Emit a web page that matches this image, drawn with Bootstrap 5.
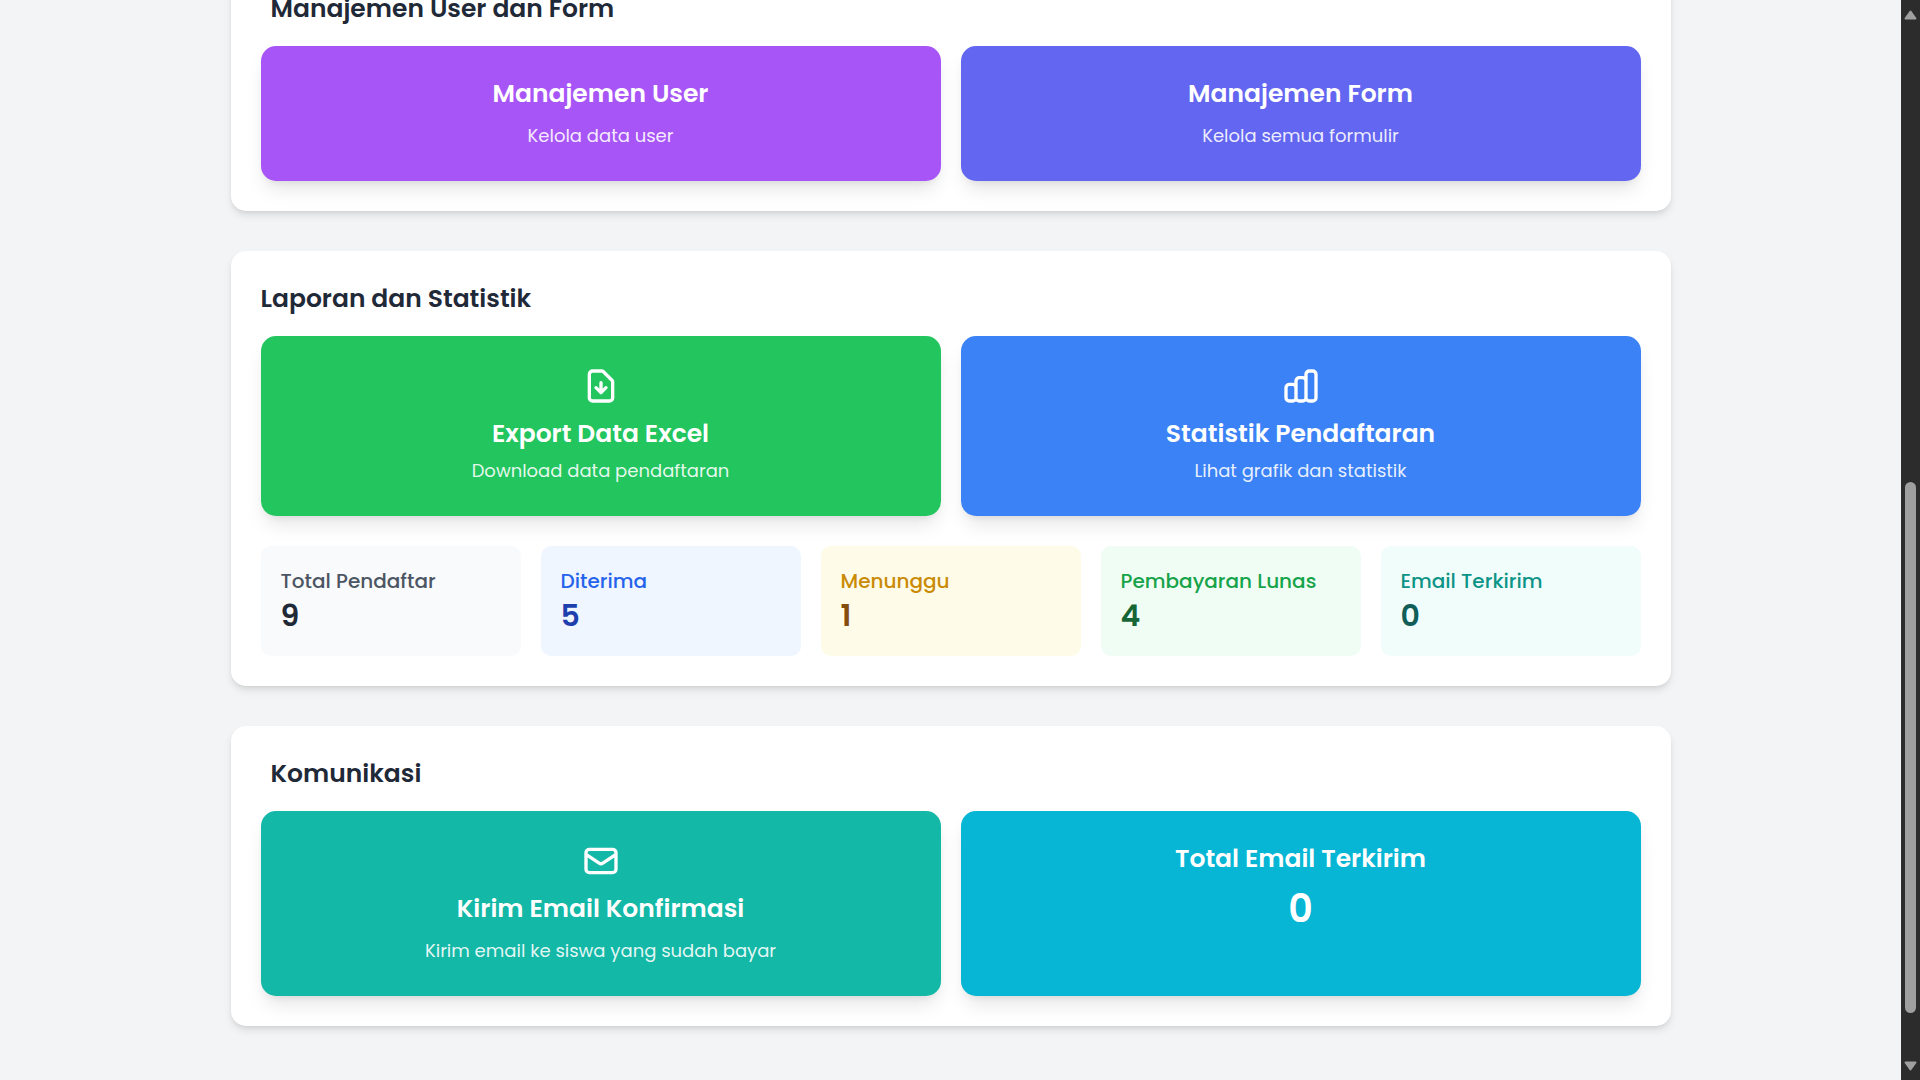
<!DOCTYPE html>
<html lang="id">
<head>
<meta charset="utf-8">
<meta name="viewport" content="width=device-width, initial-scale=1">
<title>Dashboard Admin</title>
<link rel="stylesheet" href="https://cdn.jsdelivr.net/npm/bootstrap@5.3.0/dist/css/bootstrap.min.css">
<style>
  body { background: #f3f4f6; font-family: Poppins, Inter, "Open Sans", sans-serif; color: #1f2937; }
  .viewport { height: 100vh; }
  .dash { max-width: 1440px; gap: 40px; padding-bottom: 54px; }
  .panel { background: #fff; border-radius: 15px; padding: 30px;
    box-shadow: 0 5px 8px -1px rgba(0,0,0,.1), 0 2px 5px -2px rgba(0,0,0,.1); }
  .panel-title { font-size: 25px; line-height: 35px; font-weight: 600; margin: 0 0 20px; }
  .panel-title.indent { padding-left: 10px; }
  .tile { border: 0; border-radius: 15px; padding: 30px; color: #fff; text-align: center; text-decoration: none;
    box-shadow: 0 12px 19px -4px rgba(0,0,0,.1), 0 5px 8px -5px rgba(0,0,0,.1); }
  .tile-title { font-size: 25px; line-height: 35px; font-weight: 600; margin: 0; }
  .tile-text { font-size: 18px; line-height: 30px; color: rgba(255,255,255,.9); margin: 10px 0 0; }
  .tile-text.tight { margin-top: 5px; }
  .tile-count { font-size: 38px; line-height: 45px; font-weight: 600; margin: 10px 0 0; }
  .tile svg { width: 40px; height: 40px; margin-bottom: 10px; fill: none; stroke: #fff; stroke-width: 2; stroke-linecap: round; stroke-linejoin: round; }
  .grid-gap { --bs-gutter-x: 20px; --bs-gutter-y: 20px; }
  .stats-row { margin-top: 10px; }
  .bg-purple { background: #a855f7; } .bg-indigo { background: #6366f1; }
  .bg-green { background: #22c55e; } .bg-blue { background: #3b82f6; }
  .bg-teal { background: #14b8a6; } .bg-cyan { background: #06b6d4; }
  .stat { border-radius: 10px; padding: 20px; }
  .stat-label { font-size: 20px; line-height: 30px; font-weight: 500; margin: 0; }
  .stat-value { font-size: 30px; line-height: 40px; font-weight: 600; margin: 0; }
  .stat-gray { background: #f9fafb; color: #1f2937; } .stat-gray .stat-label { color: #4b5563; }
  .stat-blue { background: #eff6ff; color: #1e40af; } .stat-blue .stat-label { color: #2563eb; }
  .stat-yellow { background: #fefce8; color: #854d0e; } .stat-yellow .stat-label { color: #ca8a04; }
  .stat-green { background: #f0fdf4; color: #166534; } .stat-green .stat-label { color: #16a34a; }
  .stat-teal { background: #f0fdfa; color: #115e59; } .stat-teal .stat-label { color: #0d9488; }
  .scroll-track { width: 19px; background: #2c2c2c; padding: 10px 0 9px; }
  .scroll-track svg { width: 13px; height: 10px; fill: #9f9f9f; stroke: #9f9f9f; stroke-width: 2; stroke-linejoin: round; }
  .scroll-space { flex: 462 1 0; }
  .scroll-thumb { flex: 531 1 0; width: 11px; border-radius: 6px; background: #9f9f9f; }
  .scroll-rest { flex: 48 1 0; }
</style>
<script src="https://cdn.jsdelivr.net/npm/bootstrap@5.3.0/dist/js/bootstrap.bundle.min.js"></script>
</head>
<body>
<div class="viewport d-flex overflow-hidden">
  <div class="flex-grow-1 d-flex flex-column justify-content-end align-items-center">
    <main class="dash w-100 d-flex flex-column flex-shrink-0">
      <section class="panel">
        <h2 class="panel-title indent">Manajemen User dan Form</h2>
        <div class="row grid-gap">
          <div class="col-6"><a href="#" class="tile bg-purple d-block h-100">
            <h3 class="tile-title">Manajemen User</h3>
            <p class="tile-text">Kelola data user</p>
          </a></div>
          <div class="col-6"><a href="#" class="tile bg-indigo d-block h-100">
            <h3 class="tile-title">Manajemen Form</h3>
            <p class="tile-text">Kelola semua formulir</p>
          </a></div>
        </div>
      </section>

      <section class="panel">
        <h2 class="panel-title">Laporan dan Statistik</h2>
        <div class="row grid-gap">
          <div class="col-6"><a href="#" class="tile bg-green d-flex flex-column align-items-center h-100">
            <svg viewBox="0 0 24 24" aria-hidden="true"><path d="M12 10v6m0 0l-3-3m3 3l3-3m2 8H7a2 2 0 01-2-2V5a2 2 0 012-2h5.586a1 1 0 01.707.293l5.414 5.414a1 1 0 01.293.707V19a2 2 0 01-2 2z"/></svg>
            <h3 class="tile-title">Export Data Excel</h3>
            <p class="tile-text tight">Download data pendaftaran</p>
          </a></div>
          <div class="col-6"><a href="#" class="tile bg-blue d-flex flex-column align-items-center h-100">
            <svg viewBox="0 0 24 24" aria-hidden="true"><path d="M9 19v-6a2 2 0 00-2-2H5a2 2 0 00-2 2v6a2 2 0 002 2h2a2 2 0 002-2zm0 0V9a2 2 0 012-2h2a2 2 0 012 2v10m-6 0a2 2 0 002 2h2a2 2 0 002-2m0 0V5a2 2 0 012-2h2a2 2 0 012 2v14a2 2 0 01-2 2h-2a2 2 0 01-2-2z"/></svg>
            <h3 class="tile-title">Statistik Pendaftaran</h3>
            <p class="tile-text tight">Lihat grafik dan statistik</p>
          </a></div>
        </div>
        <div class="row row-cols-5 grid-gap stats-row">
          <div class="col"><div class="stat stat-gray"><p class="stat-label">Total Pendaftar</p><p class="stat-value">9</p></div></div>
          <div class="col"><div class="stat stat-blue"><p class="stat-label">Diterima</p><p class="stat-value">5</p></div></div>
          <div class="col"><div class="stat stat-yellow"><p class="stat-label">Menunggu</p><p class="stat-value">1</p></div></div>
          <div class="col"><div class="stat stat-green"><p class="stat-label">Pembayaran Lunas</p><p class="stat-value">4</p></div></div>
          <div class="col"><div class="stat stat-teal"><p class="stat-label">Email Terkirim</p><p class="stat-value">0</p></div></div>
        </div>
      </section>

      <section class="panel">
        <h2 class="panel-title indent">Komunikasi</h2>
        <div class="row grid-gap">
          <div class="col-6"><button type="button" class="tile bg-teal d-flex flex-column align-items-center w-100 h-100">
            <svg viewBox="0 0 24 24" aria-hidden="true"><path d="M3 8l7.89 5.26a2 2 0 002.22 0L21 8M5 19h14a2 2 0 002-2V7a2 2 0 00-2-2H5a2 2 0 00-2 2v10a2 2 0 002 2z"/></svg>
            <span class="tile-title">Kirim Email Konfirmasi</span>
            <span class="tile-text">Kirim email ke siswa yang sudah bayar</span>
          </button></div>
          <div class="col-6"><div class="tile bg-cyan h-100">
            <h3 class="tile-title">Total Email Terkirim</h3>
            <p class="tile-count">0</p>
          </div></div>
        </div>
      </section>
    </main>
  </div>
  <div class="scroll-track d-flex flex-column align-items-center flex-shrink-0" aria-hidden="true">
    <svg viewBox="0 0 13 10"><path d="M6.5 1.5L11.5 8.5H1.5z"/></svg>
    <div class="scroll-space"></div>
    <div class="scroll-thumb"></div>
    <div class="scroll-rest"></div>
    <svg viewBox="0 0 13 10"><path d="M6.5 8.5L1.5 1.5H11.5z"/></svg>
  </div>
</div>
</body>
</html>
